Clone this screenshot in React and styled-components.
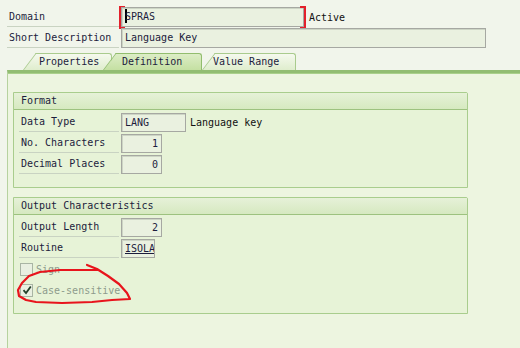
import React from "react";
import styled, { createGlobalStyle } from "styled-components";

const GlobalStyle = createGlobalStyle`
  * { box-sizing: border-box; }
  body {
    margin: 0;
    background: #f1f5eb;
    font-family: "DejaVu Sans Mono", "Liberation Mono", monospace;
    font-size: 10px;
    color: #1c1c3c;
  }
`;

const Page = styled.div`
  position: relative;
  width: 520px;
  height: 348px;
  overflow: hidden;
  background: #f1f5eb;
`;

const Header = styled.div`
  display: flex;
  flex-direction: column;
  gap: 1px;
  padding: 7px 0 0 7px;
`;

const Row = styled.div`
  display: flex;
  align-items: center;
  height: 20px;
`;

const Label = styled.div`
  width: ${p => p.$w || 100}px;
  height: 20px;
  margin-right: 2px;
  padding-left: 2px;
  line-height: 19px;
  border-bottom: 1px solid #c9d3c2;
  white-space: nowrap;
`;

const Field = styled.div`
  position: relative;
  width: ${p => p.$w}px;
  height: ${p => p.$h || 19}px;
  padding: 0 3px;
  line-height: 17px;
  background: #eaf1e0;
  border: 1px solid #a6a8a2;
  box-shadow: inset 1px 1px 0 #cdd5c5;
  text-align: ${p => (p.$right ? "right" : "left")};
  text-decoration: ${p => (p.$underline ? "underline" : "none")};
  white-space: nowrap;
  overflow: hidden;
`;

const Focus = styled.div`
  position: relative;
  &::before, &::after {
    content: "";
    position: absolute;
    top: -1px;
    bottom: -2px;
    width: 4px;
    border: 2px solid #e3202b;
  }
  &::before { left: -2px; border-right: none; }
  &::after { right: -2px; border-left: none; }
`;

const Caret = styled.span`
  display: inline-block;
  width: 2px;
  height: 14px;
  margin-right: -2px;
  vertical-align: -3px;
  background: #000;
`;

const Aside = styled.span`
  margin-left: ${p => p.$ml || 4}px;
  color: #111;
`;

const TabStrip = styled.div`
  display: flex;
  align-items: flex-end;
  padding-left: 23px;
  margin-top: 5px;
  height: 17px;
`;

const Tab = styled.div`
  position: relative;
  z-index: ${p => (p.$active ? 3 : 1)};
  width: ${p => p.$w}px;
  height: 17px;
  margin-left: ${p => p.$ml || 0}px;
  padding-left: ${p => p.$pl}px;
  line-height: 18px;
  color: #1c1c3c;
  &::before, &::after {
    content: "";
    position: absolute;
    z-index: -1;
    top: 0;
    bottom: 0;
    background: ${p =>
      p.$active
        ? "linear-gradient(#dcedc6, #c4e0a2)"
        : "linear-gradient(#f5f9ee, #dfedcd)"};
    border-top: 1px solid ${p => (p.$active ? "#92bd6e" : "#a9cb8d")};
  }
  &::before {
    left: 0;
    width: 22px;
    border-left: 1px solid ${p => (p.$active ? "#92bd6e" : "#a9cb8d")};
    transform: skewX(-37deg);
    transform-origin: bottom left;
  }
  &::after {
    left: 14px;
    right: 0;
    border-right: 1px solid ${p => (p.$active ? "#92bd6e" : "#a9cb8d")};
    border-top-right-radius: 3px;
  }
`;

const Panel = styled.div`
  margin-left: 7px;
  height: 278px;
  padding: 19px 0 0 5px;
  background: #edf5e0;
  border-left: 1px solid #b6d29e;
  border-top: 3px solid #92bd72;
  box-shadow: inset 0 1px 0 #a9d08a;
  display: flex;
  flex-direction: column;
  gap: 9px;
`;

const Group = styled.div`
  width: 455px;
  border: 1px solid #a9cd8d;
  border-top-right-radius: 2px;
  background: #e7f3d7;
`;

const GroupTitle = styled.div`
  height: 17px;
  padding-left: 7px;
  line-height: 16px;
  background: linear-gradient(#e6f1d8, #d6e9c0);
  border-bottom: 1px solid #9dc27f;
`;

const GroupBody = styled.div`
  display: flex;
  flex-direction: column;
  gap: 1px;
  padding: 2px 0 13px 5px;
`;

const Check = styled.div`
  display: flex;
  align-items: center;
  gap: 3px;
  height: 20px;
  padding-left: 1px;
  color: #8d9b8c;
`;

const Box = styled.span`
  display: inline-flex;
  align-items: center;
  justify-content: center;
  width: 13px;
  height: 13px;
  background: #e9f0e1;
  border: 1px solid #a9b5a4;
`;

const Annotation = styled.svg`
  position: absolute;
  left: 0;
  top: 0;
  pointer-events: none;
`;

export default function App() {
  return (
    <Page>
      <GlobalStyle />
      <Header>
        <Row>
          <Label $w={112}>Domain</Label>
          <Focus>
            <Field $w={183} $h={20}>
              <Caret />SPRAS
            </Field>
          </Focus>
          <Aside $ml={5}>Active</Aside>
        </Row>
        <Row>
          <Label $w={112}>Short Description</Label>
          <Field $w={365} $h={20}>Language Key</Field>
        </Row>
      </Header>

      <TabStrip>
        <Tab $w={89} $pl={16}>Properties</Tab>
        <Tab $w={99} $pl={19} $ml={-9} $active>Definition</Tab>
        <Tab $w={94} $pl={11}>Value Range</Tab>
      </TabStrip>

      <Panel>
        <Group>
          <GroupTitle>Format</GroupTitle>
          <GroupBody>
            <Row>
              <Label>Data Type</Label>
              <Field $w={65}>LANG</Field>
              <Aside>Language key</Aside>
            </Row>
            <Row>
              <Label>No. Characters</Label>
              <Field $w={41} $right>1</Field>
            </Row>
            <Row>
              <Label>Decimal Places</Label>
              <Field $w={41} $right>0</Field>
            </Row>
          </GroupBody>
        </Group>

        <Group>
          <GroupTitle>Output Characteristics</GroupTitle>
          <GroupBody>
            <Row>
              <Label>Output Length</Label>
              <Field $w={41} $right>2</Field>
            </Row>
            <Row>
              <Label>Routine</Label>
              <Field $w={34} $underline>ISOLA</Field>
            </Row>
            <Check>
              <Box />
              Sign
            </Check>
            <Check>
              <Box>
                <svg width="10" height="10" viewBox="0 0 10 10">
                  <path d="M1.5 5.2 L4 8 L8.8 1.5" fill="none" stroke="#23402a" strokeWidth="1.8" />
                </svg>
              </Box>
              Case-sensitive
            </Check>
          </GroupBody>
        </Group>
      </Panel>

      <Annotation width="520" height="348" viewBox="0 0 520 348">
        <path
          d="M87 265 L97 269 L108 276 L119 284 L127 293 L130 299 L112 300 L92 302 L62 303 L36 302 L26 300 L19 296 L18 290 L22 283 L29 276 L40 272 L60 270 L80 270 L97 270"
          fill="none"
          stroke="#e8141c"
          strokeWidth="2.2"
          strokeLinejoin="round"
          strokeLinecap="round"
        />
      </Annotation>
    </Page>
  );
}
